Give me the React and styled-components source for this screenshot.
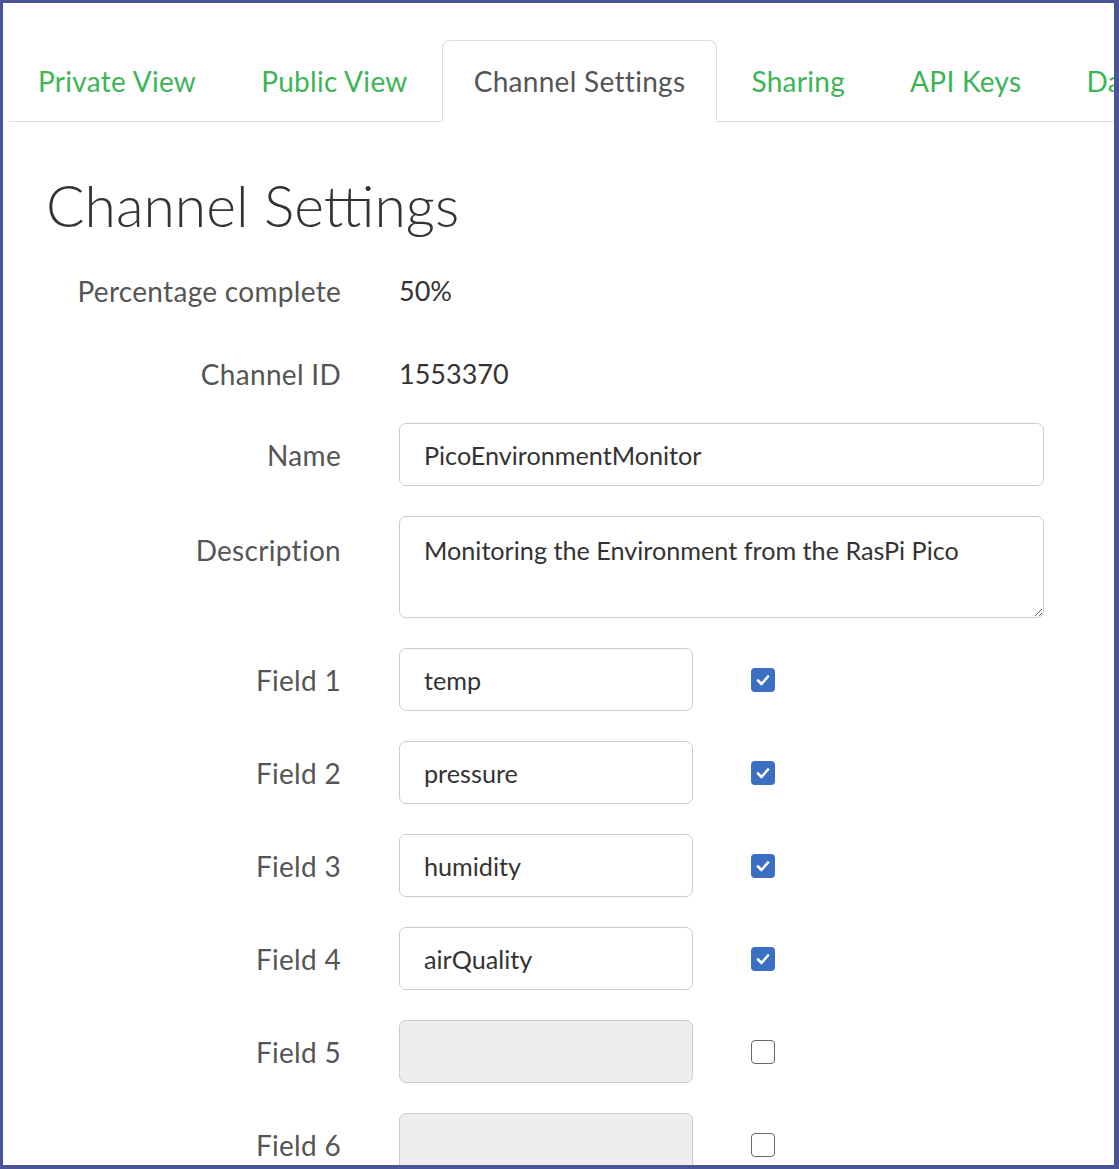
import React from "react"
import styled, { createGlobalStyle } from "styled-components"

const GlobalStyle = createGlobalStyle`
    html, body {
        margin: 0;
        padding: 0;
        background: #ffffff;
    }
    body {
        font-family: Lato, "Liberation Sans", sans-serif;
    }
`

const Frame = styled.div`
    width: 1119px;
    height: 1169px;
    box-sizing: border-box;
    border-style: solid;
    border-color: #4a5497;
    border-width: 3px 5px 4px 3px;
    background: #ffffff;
    overflow: hidden;
    padding-top: 37px;
`

const TabBar = styled.div`
    display: flex;
    margin-left: 6px;
    border-bottom: 1px solid #dddddd;
    white-space: nowrap;
`

const Tab = styled.div`
    flex: none;
    box-sizing: border-box;
    height: ${p => (p.$active ? "82px" : "81px")};
    margin-bottom: ${p => (p.$active ? "-1px" : "0")};
    margin-right: 3px;
    padding: 0 ${p => (p.$active ? "31px" : "30px")};
    display: flex;
    align-items: center;
    font-size: 28px;
    letter-spacing: 0.3px;
    color: ${p => (p.$active ? "#555555" : "#3cb556")};
    background: ${p => (p.$active ? "#ffffff" : "transparent")};
    border: 1px solid ${p => (p.$active ? "#dddddd" : "transparent")};
    border-bottom-color: ${p => (p.$active ? "#ffffff" : "transparent")};
    border-radius: 8px 8px 0 0;

    &:first-child {
        margin-left: -2px;
    }
`

const Heading = styled.h1`
    margin: 49px 0 25px 43px;
    font-size: 57px;
    font-weight: 300;
    line-height: 1.2;
    color: #333333;
`

const StaticGroup = styled.div`
    display: flex;
    flex-direction: column;
    gap: 30px;
    margin-bottom: 23px;
`

const InputGroup = styled.div`
    display: flex;
    flex-direction: column;
    gap: 30px;
`

const Row = styled.div`
    display: grid;
    grid-template-columns: 338px auto auto;
    justify-content: start;
    align-items: ${p => (p.$top ? "start" : "center")};
    column-gap: 58px;
    min-height: 53px;
`

const Label = styled.div`
    text-align: right;
    font-size: 28px;
    letter-spacing: 0.3px;
    color: #555555;
    padding-top: ${p => (p.$top ? "17px" : "0")};
`

const Value = styled.div`
    font-size: 27px;
    color: #333333;
`

const TextInput = styled.input`
    box-sizing: border-box;
    width: ${p => (p.$wide ? "645px" : "294px")};
    height: 63px;
    padding: 0 24px;
    border: 1px solid #cccccc;
    border-radius: 7px;
    background: ${p => (p.disabled ? "#eeeeee" : "#ffffff")};
    font-family: Lato, "Liberation Sans", sans-serif;
    font-size: 25.2px;
    color: #333333;
    outline: none;
`

const TextArea = styled.textarea`
    box-sizing: border-box;
    width: 645px;
    height: 102px;
    padding: 17px 24px;
    border: 1px solid #cccccc;
    border-radius: 7px;
    font-family: Lato, "Liberation Sans", sans-serif;
    font-size: 25.2px;
    line-height: 1.3;
    color: #333333;
    outline: none;
    resize: both;
`

const Check = styled.span`
    box-sizing: border-box;
    width: 24px;
    height: 24px;
    border-radius: 4px;
    border: ${p => (p.$on ? "none" : "1.5px solid #666666")};
    background: ${p => (p.$on ? "#3a6fc3" : "#ffffff")};
    display: flex;
    align-items: center;
    justify-content: center;
`

const Checkbox = ({ on }) => (
    <Check $on={on}>
        {on && (
            <svg width="16" height="16" viewBox="0 0 16 16">
                <path d="M3 8.5 L6.5 12 L13 4.5" fill="none" stroke="#ffffff" strokeWidth="2.6" strokeLinecap="round" strokeLinejoin="round" />
            </svg>
        )}
    </Check>
)

const tabs = ["Private View", "Public View", "Channel Settings", "Sharing", "API Keys", "Data Import / Export"]

const fields = [
    { name: "Field 1", value: "temp", on: true },
    { name: "Field 2", value: "pressure", on: true },
    { name: "Field 3", value: "humidity", on: true },
    { name: "Field 4", value: "airQuality", on: true },
    { name: "Field 5", value: "", on: false },
    { name: "Field 6", value: "", on: false },
]

const App = () => {
    return (
        <>
            <GlobalStyle />
            <Frame>
                <TabBar>
                    {tabs.map(t => (
                        <Tab key={t} $active={t === "Channel Settings"}>{t}</Tab>
                    ))}
                </TabBar>
                <Heading>Channel Settings</Heading>
                <StaticGroup>
                    <Row>
                        <Label>Percentage complete</Label>
                        <Value>50%</Value>
                    </Row>
                    <Row>
                        <Label>Channel ID</Label>
                        <Value>1553370</Value>
                    </Row>
                </StaticGroup>
                <InputGroup>
                    <Row>
                        <Label>Name</Label>
                        <TextInput $wide readOnly value="PicoEnvironmentMonitor" />
                    </Row>
                    <Row $top>
                        <Label $top>Description</Label>
                        <TextArea readOnly value="Monitoring the Environment from the RasPi Pico" />
                    </Row>
                    {fields.map(f => (
                        <Row key={f.name}>
                            <Label>{f.name}</Label>
                            <TextInput readOnly disabled={!f.value} value={f.value} />
                            <Checkbox on={f.on} />
                        </Row>
                    ))}
                </InputGroup>
            </Frame>
        </>
    )
}

export default App
